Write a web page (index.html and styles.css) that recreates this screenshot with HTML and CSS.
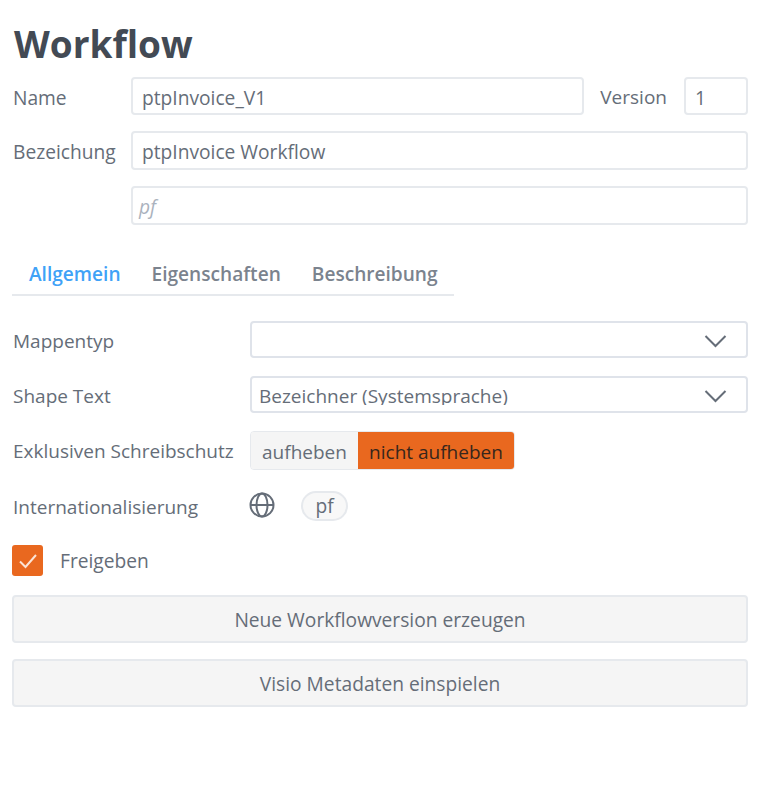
FILE: index.html
```html
<!DOCTYPE html>
<html lang="en">
<head>
    <meta charset="UTF-8">
    <title>Workflow</title>
    <link rel="stylesheet" href="styles.css">
</head>
<body>
    <div class="container">
        <h1>Workflow</h1>

        <div class="head-row row-name">
            <label class="head-label">Name</label>
            <div class="field grow">ptpInvoice_V1</div>
            <label class="version-label">Version</label>
            <div class="field version">1</div>
        </div>
        <div class="head-row row-title">
            <label class="head-label">Bezeichung</label>
            <div class="field grow">ptpInvoice Workflow</div>
        </div>
        <div class="head-row row-lang">
            <span class="head-label"></span>
            <div class="field grow placeholder">pf</div>
        </div>

        <div class="tabs">
            <span class="tab active">Allgemein</span>
            <span class="tab">Eigenschaften</span>
            <span class="tab">Beschreibung</span>
        </div>

        <div class="form-row row-type">
            <label class="form-label">Mappentyp</label>
            <div class="select">
                <svg class="chevron" viewBox="0 0 24 14"><path d="M2 2l10 10L22 2"/></svg>
            </div>
        </div>
        <div class="form-row row-shape">
            <label class="form-label">Shape Text</label>
            <div class="select">
                <span class="select-text">Bezeichner (Systemsprache)</span>
                <svg class="chevron" viewBox="0 0 24 14"><path d="M2 2l10 10L22 2"/></svg>
            </div>
        </div>
        <div class="form-row row-lock">
            <label class="form-label">Exklusiven Schreibschutz</label>
            <div class="toggle">
                <span class="toggle-off">aufheben</span>
                <span class="toggle-on">nicht aufheben</span>
            </div>
        </div>
        <div class="form-row row-intl">
            <label class="form-label">Internationalisierung</label>
            <svg class="globe" viewBox="0 0 26 26">
                <circle cx="13" cy="13" r="11.5"/>
                <ellipse cx="13" cy="13" rx="5.5" ry="11.5"/>
                <path d="M1.5 13h23"/>
            </svg>
            <span class="chip">pf</span>
        </div>

        <div class="check-row">
            <span class="checkbox">
                <svg viewBox="0 0 20 16"><path d="M2 8.5l5.5 5.5L18 2"/></svg>
            </span>
            <span>Freigeben</span>
        </div>

        <button class="wide-btn first">Neue Workflowversion erzeugen</button>
        <button class="wide-btn">Visio Metadaten einspielen</button>
    </div>
</body>
</html>
```

FILE: styles.css
```css
body {
    font-family: "Open Sans", "Noto Sans", sans-serif;
    font-size: 19.2px;
    margin: 0;
    background-color: #fff;
    color: #656d78;
}

.container {
    width: 736px;
    padding: 0 13px 0 12px;
}

h1 {
    margin: 0;
    padding: 19px 0 0 2px;
    height: 77px;
    box-sizing: border-box;
    font-size: 37px;
    line-height: 50px;
    font-weight: 700;
    color: #434a54;
}

.head-row {
    display: flex;
    align-items: center;
}

.row-title,
.row-lang {
    margin-top: 16px;
}

.head-label {
    width: 119px;
    flex-shrink: 0;
    padding: 2px 0 0 1px;
    box-sizing: border-box;
}

.field {
    height: 38px;
    box-sizing: border-box;
    border: 2px solid #e6e9ed;
    border-radius: 4px;
    padding: 0 9px;
    line-height: 37px;
    background-color: #fff;
}

.row-title .field,
.row-lang .field {
    height: 39px;
}

.grow {
    flex: 1;
}

.placeholder {
    font-style: italic;
    color: #aab2bd;
    padding-left: 6px;
}

.version-label {
    margin: 2px 17px 0 16px;
    font-size: 19px;
}

.version {
    width: 64px;
}

.tabs {
    display: flex;
    width: 442px;
    height: 41px;
    margin-top: 30px;
    padding-left: 17px;
    box-sizing: border-box;
    gap: 31px;
    border-bottom: 2px solid #e6e9ed;
    font-size: 19.1px;
    font-weight: 600;
    color: #7b838e;
    line-height: 38px;
}

.tab.active {
    color: #3fa2f7;
}

.form-row {
    display: flex;
    align-items: center;
}

.form-label {
    width: 237px;
    flex-shrink: 0;
    padding: 3px 0 0 1px;
    font-size: 19px;
    white-space: nowrap;
}

.row-type {
    margin-top: 25px;
}

.row-shape {
    margin-top: 18px;
}

.row-lock {
    margin-top: 18px;
}

.row-intl {
    margin-top: 21px;
}

.row-intl .form-label,
.row-lock .form-label {
    padding-top: 1px;
}

.select {
    flex: 1;
    position: relative;
    height: 37px;
    box-sizing: border-box;
    border: 2px solid #dfe3ea;
    border-radius: 4px;
    padding-left: 7px;
}

/* the reference cuts the descenders off here */
.select-text {
    display: block;
    height: 27px;
    overflow: hidden;
    font-size: 19px;
    line-height: 37px;
}

.chevron {
    position: absolute;
    right: 18px;
    top: 11px;
    width: 25px;
    height: 14px;
    fill: none;
    stroke: #656d78;
    stroke-width: 2;
}

.toggle {
    display: flex;
    height: 39px;
    box-sizing: border-box;
    border: 1px solid #e6e9ed;
    border-radius: 4px;
    overflow: hidden;
    font-size: 19px;
    line-height: 40px;
}

.toggle-off {
    width: 107px;
    text-align: center;
    background-color: #f5f5f5;
}

.toggle-on {
    width: 156px;
    text-align: center;
    background-color: #e9681f;
    color: #37261c;
}

.globe {
    width: 26px;
    height: 26px;
    margin: -3px 25px 0 -1px;
    fill: none;
    stroke: #656d78;
    stroke-width: 2;
}

.chip {
    width: 47px;
    height: 30px;
    margin-left: 1px;
    box-sizing: border-box;
    border: 2px solid #e6e9ed;
    border-radius: 15px;
    background-color: #f8f8f8;
    text-align: center;
    line-height: 25px;
}

.check-row {
    display: flex;
    align-items: center;
    gap: 17px;
    margin-top: 24px;
}

.checkbox {
    display: flex;
    align-items: center;
    justify-content: center;
    width: 31px;
    height: 31px;
    border-radius: 3px;
    background-color: #e9681f;
}

.checkbox svg {
    width: 20px;
    height: 16px;
    fill: none;
    stroke: #fbe4d6;
    stroke-width: 2;
}

.wide-btn {
    display: block;
    width: 100%;
    height: 48px;
    margin-top: 16px;
    border: 2px solid #e6e9ed;
    border-radius: 4px;
    background-color: #f5f5f5;
    color: #656d78;
    font-family: inherit;
    font-size: 19.2px;
}

.wide-btn.first {
    margin-top: 19px;
}
```
